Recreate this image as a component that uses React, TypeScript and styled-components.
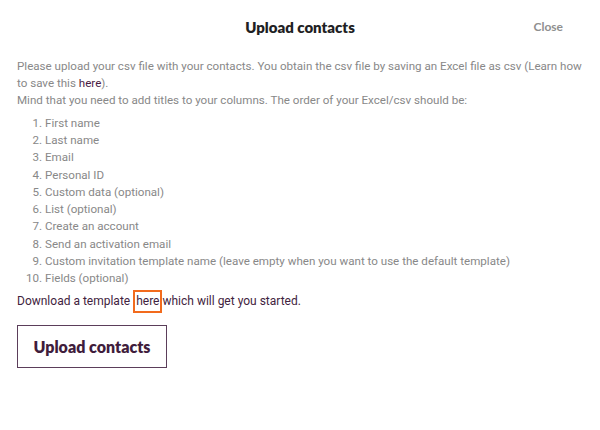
import React from 'react'
import styled, { createGlobalStyle } from 'styled-components'

const GlobalStyle = createGlobalStyle`
  html, body {
    margin: 0;
    padding: 0;
    background: #ffffff;
  }
`

const columns = [
  'First name',
  'Last name',
  'Email',
  'Personal ID',
  'Custom data (optional)',
  'List (optional)',
  'Create an account',
  'Send an activation email',
  'Custom invitation template name (leave empty when you want to use the default template)',
  'Fields (optional)',
]

const App = () => {
  return (
    <>
      <GlobalStyle />
      <Modal>
        <Header>
          <Title>Upload contacts</Title>
          <CloseButton>Close</CloseButton>
        </Header>
        <Body>
          <Intro>
            Please upload your csv file with your contacts. You obtain the csv file by saving an Excel
            file as csv (Learn how to save this <Link>here</Link>).
            <br />
            Mind that you need to add titles to your columns. The order of your Excel/csv should be:
          </Intro>
          <Columns>
            {columns.map((c) => (
              <li key={c}>{c}</li>
            ))}
          </Columns>
          <Download>
            Download a template <Highlighted>here</Highlighted>which will get you started.
          </Download>
          <UploadButton>Upload contacts</UploadButton>
        </Body>
      </Modal>
    </>
  )
}

export default App

const Modal = styled.div`
  width: 600px;
  height: 430px;
  box-sizing: border-box;
  padding: 0 17px;
  font-family: Roboto, 'Liberation Sans', sans-serif;
`

const Header = styled.div`
  position: relative;
  height: 54px;
  display: flex;
  align-items: center;
  justify-content: center;
`

const Title = styled.h2`
  margin: 0;
  font-family: Lato, 'Noto Sans', sans-serif;
  font-weight: 800;
  font-size: 15px;
  color: #1f1f24;
`

const CloseButton = styled.span`
  position: absolute;
  right: 20px;
  top: 50%;
  transform: translateY(-50%);
  margin-top: -1px;
  font-family: Lato, 'Noto Sans', sans-serif;
  font-weight: 700;
  font-size: 12px;
  color: #8f8f8f;
  cursor: pointer;
`

const Body = styled.div`
  display: flex;
  flex-direction: column;
  align-items: flex-start;
`

const Intro = styled.p`
  margin: 4px 0 0;
  font-size: 11.6px;
  line-height: 17.2px;
  color: #888888;
`

const Link = styled.a`
  color: #4a1c45;
  cursor: pointer;
`

const Columns = styled.ol`
  margin: 5px 0 0;
  padding-left: 28px;
  font-size: 11.6px;
  line-height: 17.3px;
  color: #888888;
`

const Download = styled.p`
  margin: 5px 0 0;
  font-size: 12px;
  line-height: 17px;
  color: #3f2340;
`

const Highlighted = styled.span`
  display: inline-block;
  line-height: 15px;
  padding: 2px 1px;
  margin: -3px 0;
  border: 2px solid #f26b1d;
`

const UploadButton = styled.button`
  margin-top: 15px;
  width: 150px;
  height: 43px;
  border: 1px solid #5b3e5a;
  background: #ffffff;
  font-family: Lato, 'Noto Sans', sans-serif;
  font-weight: 800;
  font-size: 16px;
  color: #3f1d3c;
  cursor: pointer;
`
